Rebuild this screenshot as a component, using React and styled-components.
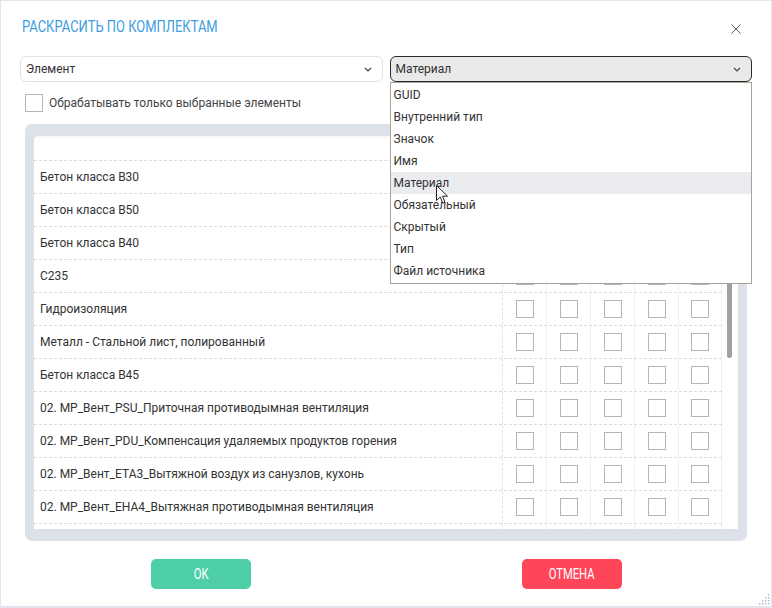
import React from "react";
import styled, { createGlobalStyle } from "styled-components";

const GlobalStyle = createGlobalStyle`
	html, body {
		margin: 0;
		padding: 0;
		background: #ffffff;
	}
	body {
		font-family: Roboto, "Liberation Sans", sans-serif;
		font-size: 12px;
		color: #333333;
	}
	* {
		box-sizing: border-box;
	}
`;

// the last row is only a sliver at the bottom edge, its name is scrolled out of view
const materials = [
	"Бетон класса B30",
	"Бетон класса B50",
	"Бетон класса B40",
	"C235",
	"Гидроизоляция",
	"Металл - Стальной лист, полированный",
	"Бетон класса B45",
	"02. MP_Вент_PSU_Приточная противодымная вентиляция",
	"02. MP_Вент_PDU_Компенсация удаляемых продуктов горения",
	"02. MP_Вент_ETA3_Вытяжной воздух из санузлов, кухонь",
	"02. MP_Вент_EHA4_Вытяжная противодымная вентиляция",
	"",
];

const parameters = [
	"GUID",
	"Внутренний тип",
	"Значок",
	"Имя",
	"Материал",
	"Обязательный",
	"Скрытый",
	"Тип",
	"Файл источника",
];

const Dialog = styled.div`
	position: relative;
	width: 772px;
	height: 608px;
	background: #ffffff;
	border: 1px solid #e2e6ec;
	border-bottom-width: 2px;
	padding: 0 19px 0 19px;
	display: flex;
	flex-direction: column;
`;

const Header = styled.div`
	height: 51px;
	display: flex;
	align-items: center;
	justify-content: space-between;
`;

const Title = styled.h1`
	margin: 0 0 0 2px;
	font-family: Roboto, "Liberation Sans", sans-serif;
	font-weight: 400;
	font-size: 16px;
	color: #3d9de2;
	text-transform: uppercase;
	transform: scaleX(0.81);
	transform-origin: left center;
	white-space: nowrap;
`;

const CloseButton = styled.button`
	width: 24px;
	height: 24px;
	margin: 4px 4px 0 0;
	padding: 0;
	border: 0;
	background: transparent;
	display: flex;
	align-items: center;
	justify-content: center;
	cursor: pointer;
`;

const SelectRow = styled.div`
	margin-top: 4px;
	display: grid;
	grid-template-columns: 1fr 1fr;
	column-gap: 7px;
`;

const SelectWrap = styled.div`
	position: relative;
`;

const SelectBox = styled.div`
	height: 26px;
	padding: 0 10px 0 5px;
	display: flex;
	align-items: center;
	justify-content: space-between;
	border-radius: 6px;
	border: 1px solid ${ props => props.open ? "#2a2a2a" : "#dfe2e8" };
	background: ${ props => props.open ? "#e9e9e9" : "#ffffff" };
	color: #333333;
	font-size: 12px;
`;

const DropList = styled.ul`
	position: absolute;
	top: 26px;
	left: 0;
	right: 0;
	margin: 0;
	padding: 1px 0 1px 0;
	list-style: none;
	background: #ffffff;
	border: 1px solid #a9a395;
	z-index: 5;
`;

const DropItem = styled.li`
	position: relative;
	height: 22px;
	padding-left: 3px;
	display: flex;
	align-items: center;
	font-size: 12px;
	color: #333333;
	background: ${ props => props.active ? "#ebecf0" : "transparent" };
`;

const Pointer = styled.svg`
	position: absolute;
	left: 45px;
	top: 13px;
	z-index: 6;
`;

const CheckRow = styled.label`
	margin: 12px 0 0 5px;
	height: 18px;
	display: flex;
	align-items: center;
	gap: 6px;
	color: #444444;
	font-size: 12px;
`;

const Box = styled.span`
	display: inline-block;
	flex: 0 0 18px;
	width: 18px;
	height: 18px;
	border: 1px solid #b5b5b5;
	background: #ffffff;
`;

const Frame = styled.div`
	margin: 12px 5px 0 5px;
	height: 417px;
	padding: 12px 9px 12px 9px;
	background: #dde1e9;
	border-radius: 7px;
`;

const Inner = styled.div`
	height: 100%;
	display: flex;
	background: #ffffff;
	border-radius: 4px 0 0 0;
	overflow: hidden;
`;

const TableArea = styled.div`
	flex: 0 0 688px;
	overflow: hidden;
`;

const Row = styled.div`
	height: ${ props => props.head ? "25px" : "33px" };
	display: grid;
	grid-template-columns: 468px repeat(5, 44px);
	border-bottom: 1px dashed #dcdcdc;
	${ props => props.head ? "box-shadow: inset 0 3px 4px -3px rgba(0, 0, 0, 0.08);" : "" }
`;

const NameCell = styled.div`
	padding-left: 6px;
	display: flex;
	align-items: center;
	white-space: nowrap;
	overflow: hidden;
	color: #333333;
	font-size: 12px;
`;

const CheckCell = styled.div`
	display: flex;
	align-items: center;
	justify-content: center;
	border-left: 1px ${ props => props.first ? "dashed #e4e4e4" : "solid #f0f0f0" };
	${ props => props.last ? "border-right: 1px solid #f0f0f0;" : "" }
`;

const ScrollTrack = styled.div`
	flex: 0 0 16px;
	padding: 0 0 0 5px;
`;

const Thumb = styled.div`
	width: 5px;
	height: 222px;
	background: #a0a0a0;
	border-radius: 0 0 3px 3px;
`;

const Footer = styled.div`
	margin-top: 18px;
	padding: 0 130px 0 131px;
	display: flex;
	justify-content: space-between;
`;

const Button = styled.button`
	width: 100px;
	height: 30px;
	border: 0;
	border-radius: 5px;
	background: ${ props => props.danger ? "#ff4659" : "#4fcfa7" };
	color: #ffffff;
	font-family: Roboto, "Liberation Sans", sans-serif;
	font-size: 14px;
	cursor: pointer;
	display: flex;
	align-items: center;
	justify-content: center;
`;

const ButtonText = styled.span`
	display: inline-block;
	transform: scaleX(0.8);
`;

const Grip = styled.svg`
	position: absolute;
	right: 1px;
	bottom: 1px;
`;

function Chevron() {
	return <svg width="8" height="5" viewBox="0 0 8 5">
		<path d="M1 1 L4 4 L7 1" fill="none" stroke="#444" strokeWidth="1.2" />
	</svg>;
}

function Select( { value, open, children } ) {
	return <SelectWrap>
		<SelectBox open={ open }>
			<span>{ value }</span>
			<Chevron />
		</SelectBox>
		{ children }
	</SelectWrap>;
}

export default function App() {
	return <>
		<GlobalStyle />
		<Dialog>
			<Header>
				<Title>Раскрасить по комплектам</Title>
				<CloseButton type="button" aria-label="Закрыть">
					<svg width="10" height="10" viewBox="0 0 10 10">
						<path d="M0.5 0.5 L9.5 9.5 M9.5 0.5 L0.5 9.5" stroke="#555" strokeWidth="1" />
					</svg>
				</CloseButton>
			</Header>

			<SelectRow>
				<Select value="Элемент" />
				<Select value="Материал" open>
					<DropList>
						{ parameters.map( p => <DropItem key={ p } active={ p === "Материал" }>
							{ p }
							{ p === "Материал" && <Pointer width="13" height="20" viewBox="0 0 13 20">
								<path
									d="M0.5 0.5 L0.5 15.5 L4.2 12 L6.8 18.2 L9 17.2 L6.5 11.2 L11.5 11.2 Z"
									fill="#ffffff"
									stroke="#222"
									strokeWidth="1"
									strokeLinejoin="round"
								/>
							</Pointer> }
						</DropItem> ) }
					</DropList>
				</Select>
			</SelectRow>

			<CheckRow>
				<Box />
				Обрабатывать только выбранные элементы
			</CheckRow>

			<Frame>
				<Inner>
					<TableArea>
						<Row head>
							<NameCell />
							{ [ 0, 1, 2, 3, 4 ].map( i => <CheckCell key={ i } first={ i === 0 } last={ i === 4 } /> ) }
						</Row>
						{ materials.map( ( m, idx ) => <Row key={ idx }>
							<NameCell>{ m }</NameCell>
							{ [ 0, 1, 2, 3, 4 ].map( i => <CheckCell key={ i } first={ i === 0 } last={ i === 4 }>
								<Box />
							</CheckCell> ) }
						</Row> ) }
					</TableArea>
					<ScrollTrack>
						<Thumb />
					</ScrollTrack>
				</Inner>
			</Frame>

			<Footer>
				<Button type="button"><ButtonText>OK</ButtonText></Button>
				<Button type="button" danger><ButtonText>ОТМЕНА</ButtonText></Button>
			</Footer>

			<Grip width="12" height="12" viewBox="0 0 12 12">
				{ [ [ 10, 2 ], [ 10, 5 ], [ 7, 5 ], [ 10, 8 ], [ 7, 8 ], [ 4, 8 ], [ 10, 11 ], [ 7, 11 ], [ 4, 11 ], [ 1, 11 ] ].map( ( [ x, y ] ) =>
					<rect key={ `${ x }-${ y }` } x={ x } y={ y - 1 } width="1.5" height="1.5" fill="#b5bcc8" />
				) }
			</Grip>
		</Dialog>
	</>;
}
